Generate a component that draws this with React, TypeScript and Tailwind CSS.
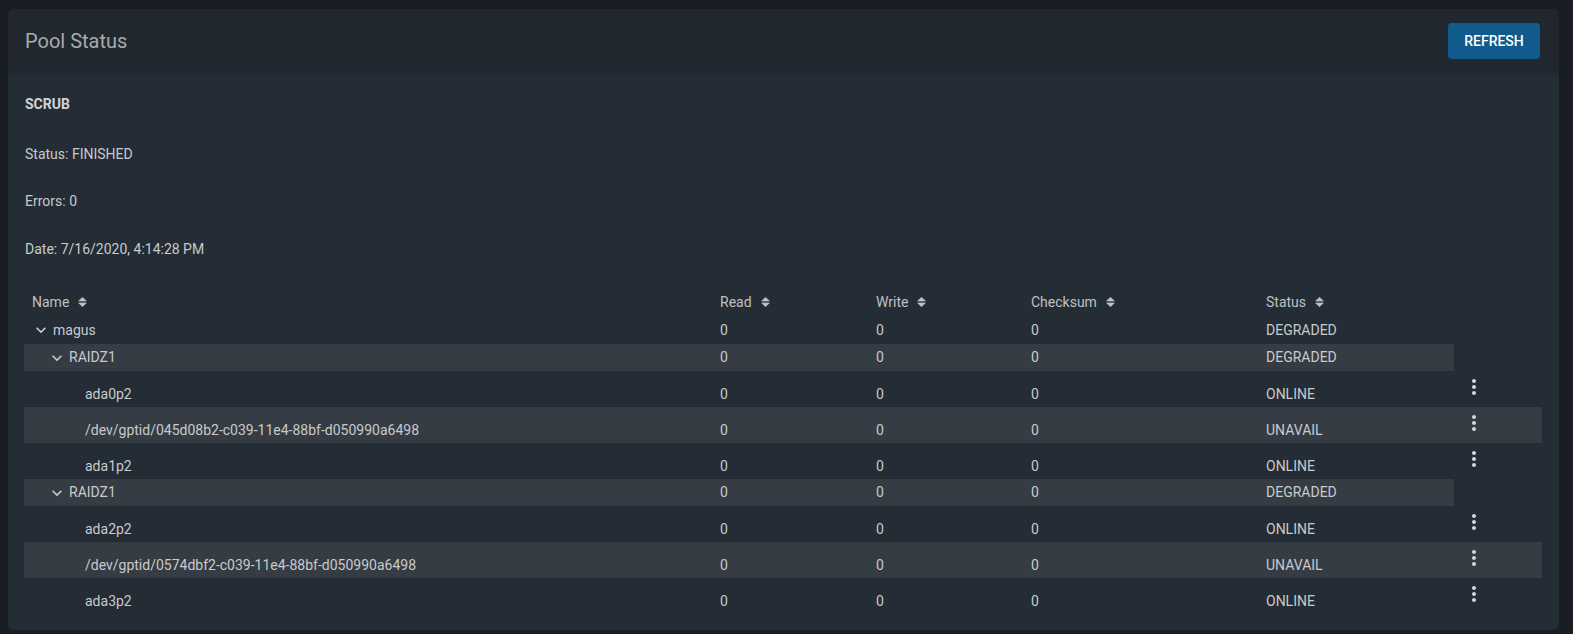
import React from "react";
import { MdExpandMore, MdMoreVert } from "react-icons/md";

type Row = {
  name: string;
  level: number;
  kind: "pool" | "vdev" | "disk";
  status: string;
  hl: boolean;
};

const rows: Row[] = [
  { name: "magus", level: 0, kind: "pool", status: "DEGRADED", hl: false },
  { name: "RAIDZ1", level: 1, kind: "vdev", status: "DEGRADED", hl: true },
  { name: "ada0p2", level: 2, kind: "disk", status: "ONLINE", hl: false },
  { name: "/dev/gptid/045d08b2-c039-11e4-88bf-d050990a6498", level: 2, kind: "disk", status: "UNAVAIL", hl: true },
  { name: "ada1p2", level: 2, kind: "disk", status: "ONLINE", hl: false },
  { name: "RAIDZ1", level: 1, kind: "vdev", status: "DEGRADED", hl: true },
  { name: "ada2p2", level: 2, kind: "disk", status: "ONLINE", hl: false },
  { name: "/dev/gptid/0574dbf2-c039-11e4-88bf-d050990a6498", level: 2, kind: "disk", status: "UNAVAIL", hl: true },
  { name: "ada3p2", level: 2, kind: "disk", status: "ONLINE", hl: false },
];

function SortIcon() {
  return (
    <svg width="9" height="10" viewBox="0 0 9 10" className="ml-[9px]" fill="#c0c2c4">
      <path d="M0.6 4.1 L4.5 0.2 L8.4 4.1 Z" strokeLinejoin="round" stroke="#c0c2c4" strokeWidth="0.6" />
      <path d="M0.6 5.9 L4.5 9.8 L8.4 5.9 Z" strokeLinejoin="round" stroke="#c0c2c4" strokeWidth="0.6" />
    </svg>
  );
}

function HeaderCell({ label, w }: { label: string; w: string }) {
  return (
    <div className={`${w} flex items-center pl-[8px]`}>
      <span>{label}</span>
      <SortIcon />
    </div>
  );
}

function TreeRow({ r }: { r: Row }) {
  const isDisk = r.kind === "disk";
  const h = isDisk ? "h-[36px]" : r.kind === "pool" ? "h-[28px]" : "h-[27px]";
  const textShift = isDisk ? "pt-[10px]" : "";
  const indent = r.level === 0 ? "pl-[7px]" : r.level === 1 ? "pl-[23px]" : "pl-[39px]";
  return (
    <div className={`flex ${h} ${r.hl ? "bg-[#363c43]" : ""} ${isDisk ? "w-[1518px]" : "w-[1430px]"}`}>
      <div className={`w-[688px] flex items-center ${indent} ${textShift}`}>
        {isDisk ? (
          <span className="w-[20px] mr-[2px]" />
        ) : (
          <MdExpandMore size={20} className="mr-[2px] text-[#c9cbcd]" />
        )}
        <span>{r.name}</span>
      </div>
      <div className={`w-[156px] flex items-center pl-[8px] ${textShift}`}>0</div>
      <div className={`w-[155px] flex items-center pl-[8px] ${textShift}`}>0</div>
      <div className={`w-[235px] flex items-center pl-[8px] ${textShift}`}>0</div>
      <div className={`w-[196px] flex items-center pl-[8px] ${textShift}`}>{r.status}</div>
      {isDisk && (
        <div className="w-[88px] flex items-center pl-[8px] pb-[4px]">
          <MdMoreVert size={24} className="text-[#d4d6d8]" />
        </div>
      )}
    </div>
  );
}

export default function App() {
  return (
    <div
      className="min-h-[634px] w-full bg-[#1a1e24] pt-[9px] pb-[4px] pl-[8px] pr-[14px]"
      style={{ fontFamily: "Roboto, 'Liberation Sans', sans-serif" }}
    >
      <div className="w-[1551px] rounded-[6px] overflow-hidden bg-[#242c35] h-[621px]">
        <div className="h-[64px] bg-[#21272e] flex items-center justify-between pl-[17px] pr-[19px]">
          <div className="text-[20px] text-[#a9abad]">Pool Status</div>
          <button className="w-[92px] h-[36px] rounded-[4px] bg-[#115b8c] text-white text-[14px] font-medium">
            REFRESH
          </button>
        </div>
        <div className="pl-[17px] pt-[23px] text-[14px] text-[#c8cacc]">
          <div className="leading-[16px] font-bold text-[#d2d4d6]">SCRUB</div>
          <div className="leading-[16px] mt-[34px]">Status: FINISHED</div>
          <div className="leading-[16px] mt-[31px]">Errors: 0</div>
          <div className="leading-[16px] mt-[32px]">Date: 7/16/2020, 4:14:28 PM</div>
        </div>
        <div className="pl-[16px] pt-[31px] text-[14px] text-[#c8cacc]">
          <div className="flex h-[28px] text-[#bfc1c3]">
            <HeaderCell label="Name" w="w-[688px]" />
            <HeaderCell label="Read" w="w-[156px]" />
            <HeaderCell label="Write" w="w-[155px]" />
            <HeaderCell label="Checksum" w="w-[235px]" />
            <HeaderCell label="Status" w="w-[196px]" />
          </div>
          {rows.map((r, i) => (
            <TreeRow key={i} r={r} />
          ))}
        </div>
      </div>
    </div>
  );
}
